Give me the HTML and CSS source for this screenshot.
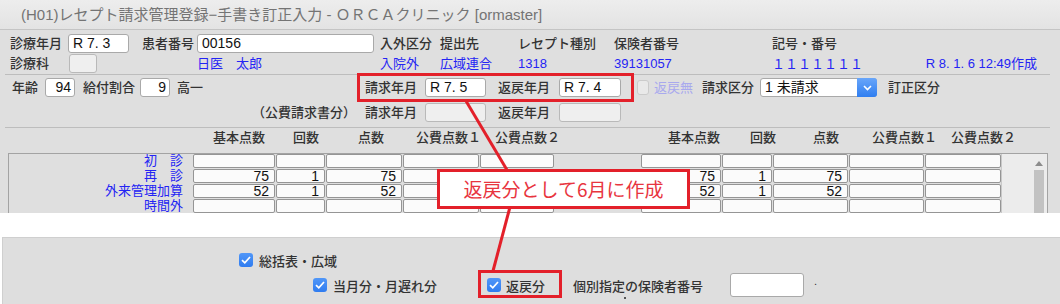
FILE: index.html
```html
<!DOCTYPE html>
<html lang="ja">
<head>
<meta charset="UTF-8">
<title>レセプト請求管理登録</title>
<link rel="stylesheet" href="styles.css">
</head>
<body>
<div class="page">
  <div class="window">
    <div class="titlebar">(H01)レセプト請求管理登録−手書き訂正入力 - ＯＲＣＡクリニック [ormaster]</div>

    <div class="head">
      <span class="lbl">診療年月</span>
      <span class="field w61">R 7. 3</span>
      <span class="lbl">患者番号</span>
      <span class="field w177">00156</span>
      <span class="lbl">入外区分</span>
      <span class="lbl">提出先</span>
      <span class="lbl">レセプト種別</span>
      <span class="lbl">保険者番号</span>
      <span class="lbl">記号・番号</span>

      <span class="lbl">診療科</span>
      <span class="field w28 off"></span>
      <span></span>
      <span class="val">日医　太郎</span>
      <span class="val">入院外</span>
      <span class="val">広域連合</span>
      <span class="val">1318</span>
      <span class="val">39131057</span>
      <span class="val split"><span class="wide">１１１１１１１</span><span>R 8. 1. 6 12:49作成</span></span>
    </div>
    <div class="rule"></div>

    <div class="claim">
      <div class="base">
        <span class="lbl">年齢</span>
        <span class="field w30 num gap7">94</span>
        <span class="lbl gap8">給付割合</span>
        <span class="field w30 num gap5">9</span>
        <span class="lbl gap7">高一</span>
      </div>
      <span class="lbl">請求年月</span>
      <span class="field w61">R 7. 5</span>
      <span class="lbl">返戻年月</span>
      <span class="field w62">R 7. 4</span>
      <span class="opt"><span class="box-off"></span><span class="dim">返戻無</span></span>
      <span class="lbl">請求区分</span>
      <span class="select">1 未請求<span class="arrow"><svg width="9" height="6" viewBox="0 0 9 6"><path d="M1 1l3.5 3.5L8 1" fill="none" stroke="#fff" stroke-width="1.6"/></svg></span></span>
      <span class="lbl">訂正区分</span>

      <span class="lbl note">（公費請求書分）</span>
      <span class="lbl">請求年月</span>
      <span class="field w61 off"></span>
      <span class="lbl">返戻年月</span>
      <span class="field w62 off"></span>
    </div>
    <div class="rule rule-2"></div>

    <div class="heads">
      <span>基本点数</span><span>回数</span><span>点数</span><span>公費点数１</span><span>公費点数２</span>
      <span>基本点数</span><span>回数</span><span>点数</span><span>公費点数１</span><span>公費点数２</span>
    </div>

    <div class="sheet">
      <div class="rows">
        <div class="row">
          <span class="item">初　診</span>
          <span class="cell"></span><span class="cell"></span><span class="cell"></span><span class="cell"></span><span class="cell"></span>
          <span></span>
          <span class="cell"></span><span class="cell"></span><span class="cell"></span><span class="cell"></span><span class="cell"></span>
        </div>
        <div class="row">
          <span class="item">再　診</span>
          <span class="cell">75</span><span class="cell">1</span><span class="cell">75</span><span class="cell"></span><span class="cell"></span>
          <span></span>
          <span class="cell">75</span><span class="cell">1</span><span class="cell">75</span><span class="cell"></span><span class="cell"></span>
        </div>
        <div class="row">
          <span class="item">外来管理加算</span>
          <span class="cell">52</span><span class="cell">1</span><span class="cell">52</span><span class="cell"></span><span class="cell"></span>
          <span></span>
          <span class="cell">52</span><span class="cell">1</span><span class="cell">52</span><span class="cell"></span><span class="cell"></span>
        </div>
        <div class="row">
          <span class="item">時間外</span>
          <span class="cell"></span><span class="cell"></span><span class="cell"></span><span class="cell"></span><span class="cell"></span>
          <span></span>
          <span class="cell"></span><span class="cell"></span><span class="cell"></span><span class="cell"></span><span class="cell"></span>
        </div>
      </div>
      <div class="scroll">
        <div class="track">
          <span class="up"></span>
          <span class="thumb"></span>
        </div>
      </div>
    </div>
  </div>

  <div class="gap"></div>

  <div class="panel">
    <div class="prow prow-1">
      <span class="check"><svg width="10" height="8" viewBox="0 0 10 8"><path d="M1 4.2l2.8 2.6L9 1" fill="none" stroke="#fff" stroke-width="1.7"/></svg></span>
      <span class="plbl">総括表・広域</span>
    </div>
    <div class="prow prow-2">
      <span class="check"><svg width="10" height="8" viewBox="0 0 10 8"><path d="M1 4.2l2.8 2.6L9 1" fill="none" stroke="#fff" stroke-width="1.7"/></svg></span>
      <span class="plbl">当月分・月遅れ分</span>
      <span class="check ret"><svg width="10" height="8" viewBox="0 0 10 8"><path d="M1 4.2l2.8 2.6L9 1" fill="none" stroke="#fff" stroke-width="1.7"/></svg></span>
      <span class="plbl">返戻分</span>
      <span class="plbl each">個別指定の保険者番号<i class="dot"></i></span>
      <span class="pfield"></span>
      <span class="pdot">.</span>
    </div>
  </div>

  <svg class="lines" width="1060" height="304" viewBox="0 0 1060 304">
    <line x1="466" y1="101" x2="507" y2="170" stroke="#e3202a" stroke-width="3"/>
    <line x1="510" y1="207" x2="493" y2="271" stroke="#e3202a" stroke-width="3"/>
  </svg>
  <div class="mark mark-month"></div>
  <div class="mark mark-return"></div>
  <div class="callout">返戻分として6月に作成</div>
</div>
</body>
</html>
```

FILE: styles.css
```css
* {box-sizing: border-box}
body {margin: 0; background: #fff; font: 13px "Liberation Sans", "Noto Sans CJK JP", sans-serif; color: #333}
.page {position: relative; width: 1060px; height: 304px; overflow: hidden}

/* window */
.window {height: 213px; background: #dfdfdf; overflow: hidden}
.titlebar {height: 30px; padding-left: 21px; line-height: 29px; font-size: 15px; color: #747474; background: linear-gradient(#ededed, #e3e3e3); border-bottom: 1px solid #c4c4c4; white-space: nowrap}

.lbl {font-weight: 500; color: #333; white-space: nowrap; line-height: 19px}
.val {color: #2424f4; white-space: nowrap; line-height: 19px}
.split {display: flex; justify-content: space-between}
.wide {font-family: "Noto Sans CJK JP", sans-serif}

.field {display: block; height: 19px; padding: 0 4px; background: #fff; border: 1px solid #a9a9a9; border-radius: 3px; font-size: 14px; line-height: 17px; color: #111; white-space: nowrap}
.field.off {background: #efefef; border-color: #b9b9b9}
.field.num {text-align: right; padding-right: 3px}
.w28 {width: 28px; margin-left: 1px}
.w30 {width: 30px}
.w61 {width: 61px}
.w62 {width: 62px}
.w177 {width: 177px}
.gap5 {margin-left: 5px}
.gap7 {margin-left: 7px}
.gap8 {margin-left: 8px}

.head {display: grid; grid-template-columns: 58px 74px 55px 183px 60px 78px 96px 158px 1fr; grid-template-rows: 19px 19px; row-gap: 1px; align-items: center; padding: 4px 23px 0 10px}
.rule {height: 1px; background: #bdbdbd; margin: 1px 10px 0 5px}
.rule-2 {margin-top: 5px}

.claim {display: grid; grid-template-columns: 353px 60px 73px 61px 78px 65px 58px 128px 1fr; grid-template-rows: 19px 19px; row-gap: 6px; align-items: center; margin-top: 3px; padding-left: 12px}
.base {display: flex; align-items: center}
.note {text-align: right; padding-right: 9px}
.opt {display: flex; align-items: center; gap: 5px}
.box-off {width: 12px; height: 15px; background: #e9e9e9; border: 1px solid #cbcbcb; border-radius: 3px}
.dim {color: #a9a9ee; line-height: 19px}
.select {position: relative; display: block; width: 117px; height: 19px; padding-left: 4px; background: #fff; border: 1px solid #a9a9a9; border-radius: 3px; font-size: 14px; line-height: 17px; color: #111}
.arrow {position: absolute; top: -1px; right: -1px; width: 20px; height: 19px; display: flex; align-items: center; justify-content: center; background: linear-gradient(#69a6fa, #2f7ef0); border-radius: 0 3px 3px 0}

/* column headings */
.heads {display: grid; grid-template-columns: 80px 65px 58px 79px 173px 82px 63px 59px 79px 1fr; height: 20px; padding-left: 213px; font-weight: 500; line-height: 20px; white-space: nowrap}

/* table */
.sheet {display: flex; margin: 5px 0 0 8px; width: 1040px; height: 70px; border: 1px solid #a3a3a3; border-bottom: 0}
.rows {display: grid; grid-auto-rows: 14px; row-gap: 1px; width: 992px}
.row {display: grid; grid-template-columns: 183px 82px 49px 76px 76px 74px 85px 80px 50px 75px 75px 76px; column-gap: 1px}
.item {text-align: right; padding-right: 9px; color: #2424f4; line-height: 14px; white-space: nowrap}
.cell {background: #fbfbfb; border: 1px solid #959595; border-radius: 2px; text-align: right; padding-right: 5px; font-size: 14px; line-height: 12px; color: #111}
.scroll {flex: 1; display: flex; justify-content: flex-end; padding-right: 2px; background: #ececec; border-left: 1px solid #c9c9c9}
.track {display: flex; flex-direction: column; align-items: center; width: 12px}
.up {margin-top: 7px; width: 0; height: 0; border-left: 4px solid transparent; border-right: 4px solid transparent; border-bottom: 5px solid #8c8c8c}
.thumb {margin-top: 4px; width: 10px; flex: 1; background: #c2c2c2}

/* bottom panel */
.gap {height: 24px}
.panel {height: 67px; margin-left: 2px; background: #dedede; border-top: 1px solid #cfcfcf; border-left: 1px solid #cfcfcf}
.prow {display: flex; align-items: center}
.prow-1 {height: 14px; margin-top: 15px; padding-left: 236px}
.prow-2 {height: 24px; margin-top: 6px; padding-left: 310px}
.check {display: flex; align-items: center; justify-content: center; width: 14px; height: 14px; margin-right: 6px; background: linear-gradient(#5197f8, #2f7cf0); border-radius: 3px}
.check.ret {margin-left: 50px; margin-right: 5px}
.plbl {position: relative; font-weight: 500; white-space: nowrap}
.each {margin-left: 28px}
.dot {position: absolute; left: 51px; top: 21px; width: 2px; height: 2px; background: #555}
.pfield {width: 74px; height: 24px; margin-left: 27px; background: #fff; border: 1px solid #a9a9a9; border-radius: 3px}
.pdot {margin: -8px 0 0 10px; font-size: 11px}

/* annotations over the screenshot */
.lines {position: absolute; left: 0; top: 0; pointer-events: none}
.mark {position: absolute; border: 3px solid #e3202a}
.mark-month {left: 357px; top: 73px; width: 277px; height: 29px}
.mark-return {left: 478px; top: 270px; width: 84px; height: 28px}
.callout {position: absolute; left: 437px; top: 169px; width: 253px; height: 40px; border: 3px solid #e3202a; background: #fff; color: #e8353f; font: 19px "Noto Sans CJK JP", sans-serif; line-height: 33px; text-align: center}
```
